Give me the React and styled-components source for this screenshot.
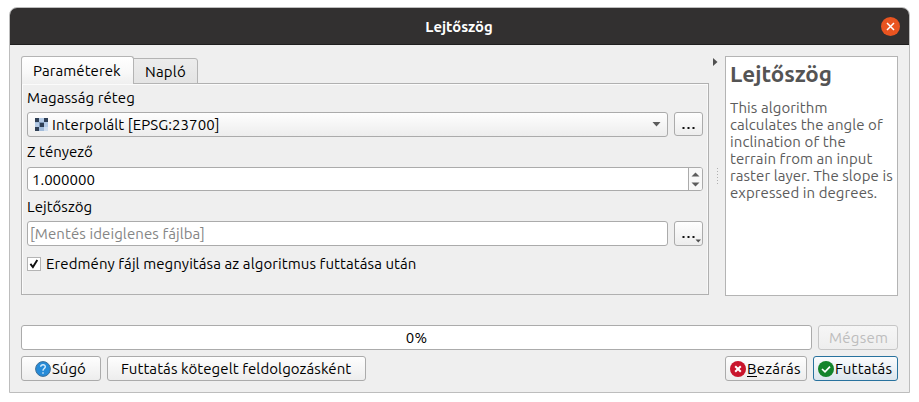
import React from "react";
import styled, { createGlobalStyle, css } from "styled-components";

const GlobalStyle = createGlobalStyle`
  * { box-sizing: border-box; }
  body {
    margin: 0;
    background: #fff;
    color: #000;
    font: 15px/17px "Ubuntu", "Noto Sans", sans-serif;
    overflow: hidden;
  }
`;

const Text = styled.span`
  white-space: nowrap;
  letter-spacing: ${(p) => p.$track ?? 0.09}px;
`;

const Window = styled.main`
  width: 901px;
  height: 386px;
  margin: 7px 0 0 9px;
  display: flex;
  flex-direction: column;
  background: #efefef;
  border: 1px solid #bdbdbd;
  border-radius: 8px 8px 0 0;
`;

const TitleBar = styled.header`
  height: 37px;
  flex: none;
  display: grid;
  grid-template-columns: 29px 1fr 30px;
  align-items: center;
  background: #323030;
  border-bottom: 1px solid #1f1e1e;
  border-radius: 7px 7px 0 0;
  color: #fff;
`;

const WindowTitle = styled.h1`
  grid-column: 2;
  margin: 0;
  font-size: 14.8px;
  line-height: 17px;
  font-weight: 700;
  text-align: center;
`;

const CloseButton = styled.button`
  width: 19px;
  height: 19px;
  padding: 0;
  margin-left: 2px;
  border: 0;
  border-radius: 50%;
  background: #e95420;
  display: grid;
  place-items: center;
`;

const Content = styled.div`
  flex: 1;
  display: flex;
  flex-direction: column;
  padding: 11px 11px 11px;
`;

const Workspace = styled.div`
  height: 240px;
  display: grid;
  grid-template-columns: 688px 16px 173px;
`;

const TabWidget = styled.section`
  display: flex;
  flex-direction: column;
  height: 239px;
`;

const TabBar = styled.div`
  display: flex;
  align-items: flex-end;
  height: 28px;
  margin-bottom: -1px;
  z-index: 1;
`;

const Tab = styled.div`
  border: 1px solid #b4b4b4;
  border-radius: 3px 3px 0 0;
  ${(p) =>
    p.$active
      ? css`
          width: 113px;
          height: 28px;
          padding: 5px 0 0 11px;
          border-bottom: 0;
          background: linear-gradient(#fff, #f8f8f8 60%, #efefef);
        `
      : css`
          width: 65px;
          height: 26px;
          margin-left: -1px;
          padding: 4px 0 0 11px;
          border-top-left-radius: 0;
          background: linear-gradient(#ececec, #e4e4e4);
        `}
`;

const Pane = styled.div`
  flex: 1;
  display: flex;
  flex-direction: column;
  padding: 5px 5px 0;
  border: 1px solid #b0b0b0;
  box-shadow: inset 1px 1px #fbfbfb, inset -1px 0 #f8f8f8;
`;

const Label = styled.label`
  height: 17px;
  margin-top: ${(p) => p.$top || 0}px;
`;

const FieldRow = styled.div`
  display: grid;
  grid-template-columns: ${(p) => (p.$wide ? "676px" : "641px 29px")};
  column-gap: 6px;
  margin-top: ${(p) => p.$top}px;
`;

const frame = css`
  border: 1px solid #ababab;
  border-radius: 3px;
`;
const raised = css`
  ${frame}
  background: linear-gradient(#fefefe, #ededed);
`;

const ComboBox = styled.div`
  ${raised}
  height: 25px;
  display: flex;
  align-items: center;
  padding: 0 6px 0 7px;
  gap: 3px;
`;

const ComboArrow = styled.svg`
  margin-left: auto;
`;

const Field = styled.div`
  ${frame}
  height: ${(p) => p.$height}px;
  background: #fff;
  display: flex;
  align-items: center;
  padding-left: ${(p) => p.$pad}px;
  color: ${(p) => (p.$placeholder ? "#858585" : "#000")};
`;

const Stepper = styled.div`
  margin-left: auto;
  width: 14px;
  height: 22px;
  display: grid;
  place-items: center;
  border-left: 1px solid #ababab;
  border-radius: 0 2px 2px 0;
  background: #f8f8f8;
`;

const ToolButton = styled.button`
  ${raised}
  width: 29px;
  height: ${(p) => p.$height}px;
  padding: 0;
  display: grid;
  place-items: center;
`;

const CheckRow = styled.label`
  display: flex;
  align-items: center;
  gap: 5px;
  height: 17px;
  margin-top: 9px;
`;

const CheckBox = styled.span`
  width: 14px;
  height: 14px;
  border: 1px solid #b4b4b4;
  background: #fff;
  display: grid;
  place-items: center;
`;

const Splitter = styled.div`
  display: flex;
  flex-direction: column;
  align-items: flex-start;
  padding: 2px 0 0 4px;
`;

const Grip = styled.div`
  width: 1px;
  height: 17px;
  margin: 102px 0 0 4px;
  background: repeating-linear-gradient(#b0b0b0 0 1px, transparent 1px 3px);
`;

const HelpPanel = styled.aside`
  border: 1px solid #b4b4b4;
  background: #fff;
  color: #5c5c5c;
  padding: 4px 0 0 4px;
`;

const HelpTitle = styled.h2`
  margin: 0 0 12px;
  font-size: 22.4px;
  line-height: 26px;
  font-weight: 700;
  color: #545454;
`;

const HelpText = styled.p`
  margin: 0;
  display: flex;
  flex-direction: column;
`;

const ProgressRow = styled.div`
  display: grid;
  grid-template-columns: 791px 80px;
  column-gap: 6px;
  margin-top: 29px;
`;

const Progress = styled.div`
  ${frame}
  height: 25px;
  display: flex;
  align-items: center;
  justify-content: center;
  background: #fff;
`;

const Footer = styled.footer`
  display: flex;
  gap: 6px;
  margin-top: 6px;
`;

const Button = styled.button`
  ${raised}
  width: ${(p) => p.$width}px;
  height: 25px;
  padding: 0 0 0 ${(p) => p.$pad}px;
  margin-left: ${(p) => (p.$push ? "auto" : 0)};
  display: flex;
  align-items: center;
  gap: 1px;
  font: inherit;
  color: #000;
  ${(p) =>
    p.$primary &&
    css`
      border-color: #28729e;
      background: linear-gradient(#fbfcfd, #dbe5ed);
    `}
  ${(p) =>
    p.disabled &&
    css`
      border-color: #c6c6c6;
      background: linear-gradient(#f6f6f6, #eeeeee);
      color: #bdbdbd;
    `}
`;

const Mnemonic = styled.span`
  border-bottom: 1px solid #000;
  display: inline-block;
  height: 17px;
`;

const Svg = ({ w, h, children }) => (
  <svg width={w} height={h} viewBox={`0 0 ${w} ${h}`} fill="none">{children}</svg>
);

const RasterIcon = () => (
  <Svg w={14} h={13}>
    <rect width="13" height="13" fill="#b3c9e4" />
    <path d="M0 0h4v4H0zM9 0h4v4H9zM5 5h4v4H5zM0 9h4v4H0z" fill="#2f3f55" />
    <path d="M4 4h5v1H4zM4 5h1v4H4z" fill="#7d96b5" />
    <path d="M0 4h4v1H0zM4 9h5v4H4z" fill="#a2bbd9" />
    <path d="M9 9h4v4H9z" fill="#d0deee" />
  </Svg>
);

const HELP_LINES = [
  ["This algorithm", 0.09],
  ["calculates the angle of", 0.07],
  ["inclination of the", 0.1],
  ["terrain from an input", 0.09],
  ["raster layer. The slope is", 0.07],
  ["expressed in degrees.", 0.07],
];

const Dots = ({ menu }) => (
  <Svg w={27} h={23}>
    <path d="M7.5 14h2v2h-2zM12.5 14h2v2h-2zM17.5 14h2v2h-2z" fill="#111" />
    {menu && <path d="M20.5 17.5h5.5l-2.7 3z" fill="#505050" />}
  </Svg>
);

export default function App() {
  return (
    <>
      <GlobalStyle />
      <Window>
        <TitleBar>
          <WindowTitle>Lejtőszög</WindowTitle>
          <CloseButton aria-label="Bezárás">
            <Svg w={9} h={9}><path d="M1 1l7 7M8 1L1 8" stroke="#fff" strokeWidth="1.5" /></Svg>
          </CloseButton>
        </TitleBar>
        <Content>
          <Workspace>
            <TabWidget>
              <TabBar>
                <Tab $active><Text $track={0.08}>Paraméterek</Text></Tab>
                <Tab><Text $track={0.22}>Napló</Text></Tab>
              </TabBar>
              <Pane>
                <Label><Text>Magasság réteg</Text></Label>
                <FieldRow $top={6}>
                  <ComboBox>
                    <RasterIcon />
                    <Text>Interpolált [EPSG:23700]</Text>
                    <ComboArrow width="9" height="5"><path d="M0.5 0h8L4.5 4.6z" fill="#5c5c5c" /></ComboArrow>
                  </ComboBox>
                  <ToolButton $height={24} aria-label="Tallózás"><Dots /></ToolButton>
                </FieldRow>
                <Label $top={6}><Text $track={0.03}>Z tényező</Text></Label>
                <FieldRow $wide $top={7}>
                  <Field $height={24} $pad={4}>
                    <Text $track={0}>1.000000</Text>
                    <Stepper>
                      <Svg w={9} h={15}><path d="M0.5 4.6h8L4.5 0.6zM0.5 10.4h8l-4 4z" fill="#5c5c5c" /></Svg>
                    </Stepper>
                  </Field>
                </FieldRow>
                <Label $top={7}><Text $track={0.03}>Lejtőszög</Text></Label>
                <FieldRow $top={6}>
                  <Field $height={25} $pad={2} $placeholder><Text>[Mentés ideiglenes fájlba]</Text></Field>
                  <ToolButton $height={25} aria-label="Tallózás"><Dots menu /></ToolButton>
                </FieldRow>
                <CheckRow>
                  <CheckBox>
                    <Svg w={10} h={10}><path d="M1.4 4.9l2.5 3.2L8.3 1" stroke="#111" strokeWidth="1.9" /></Svg>
                  </CheckBox>
                  <Text>Eredmény fájl megnyitása az algoritmus futtatása után</Text>
                </CheckRow>
              </Pane>
            </TabWidget>
            <Splitter>
              <Svg w={5} h={8}><path d="M0 0l4.5 4L0 8z" fill="#505050" /></Svg>
              <Grip />
            </Splitter>
            <HelpPanel>
              <HelpTitle>Lejtőszög</HelpTitle>
              <HelpText>
                {HELP_LINES.map(([line, track]) => <Text key={line} $track={track}>{line}</Text>)}
              </HelpText>
            </HelpPanel>
          </Workspace>
          <ProgressRow>
            <Progress><Text $track={0.3}>0%</Text></Progress>
            <Button $width={80} $pad={10} disabled><Text $track={0.25}>Mégsem</Text></Button>
          </ProgressRow>
          <Footer>
            <Button $width={80} $pad={13}>
              <Svg w={16} h={16}>
                <circle cx="8" cy="8" r="7.4" fill="#268bd8" stroke="#3f6f96" />
                <path d="M5.7 5.8C5.9 3 10.4 3 10.3 5.8 10.3 7.6 8 7.6 8 9.8M8 11.3v1.5" stroke="#d9edfb" strokeWidth="1.4" />
              </Svg>
              <Text $track={0}>Súgó</Text>
            </Button>
            <Button $width={259} $pad={13}><Text>Futtatás kötegelt feldolgozásként</Text></Button>
            <Button $width={82} $pad={4} $push>
              <Svg w={16} h={16}>
                <circle cx="8" cy="8" r="8" fill="#c9152c" />
                <path d="M5.2 5.2l5.6 5.6M10.8 5.2l-5.6 5.6" stroke="#fff" strokeWidth="2" />
              </Svg>
              <Text $track={0.2}><Mnemonic>B</Mnemonic>ezárás</Text>
            </Button>
            <Button $width={85} $pad={4} $primary>
              <Svg w={16} h={16}>
                <circle cx="8" cy="8" r="8" fill="#14842b" />
                <path d="M4 8l3 2.9 5-5.2" stroke="#fff" strokeWidth="1.7" />
              </Svg>
              <Text $track={0.17}>Futtatás</Text>
            </Button>
          </Footer>
        </Content>
      </Window>
    </>
  );
}
